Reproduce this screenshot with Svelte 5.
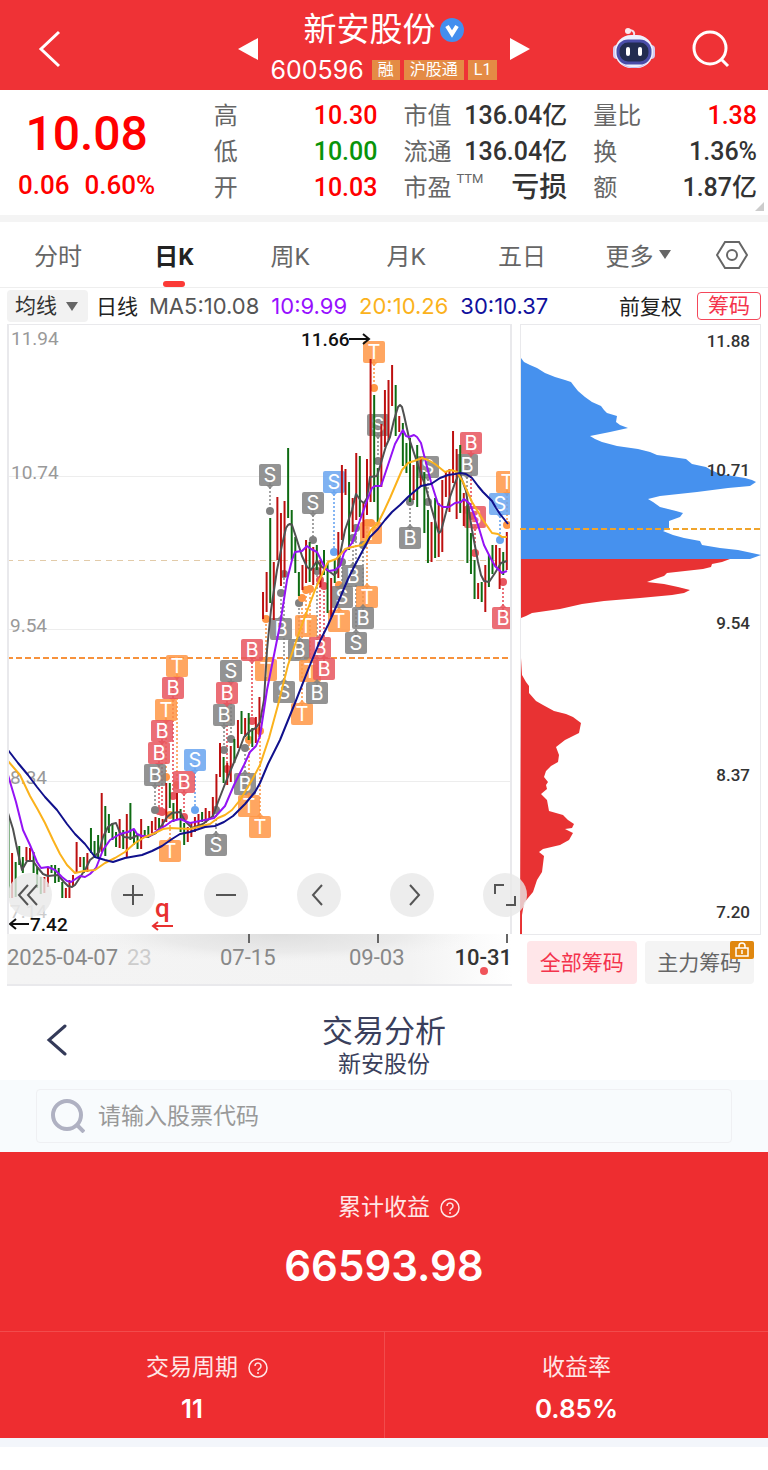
<script>
  let period = $state('日K');
  let chipMode = $state('all');
  let code = $state('');
  let indicator = $state('均线');

  const quoteColumns = [
    [
      { label: '高', value: '10.30', tone: 'up' },
      { label: '低', value: '10.00', tone: 'down' },
      { label: '开', value: '10.03', tone: 'up' },
    ],
    [
      { label: '市值', value: '136.04亿' },
      { label: '流通', value: '136.04亿' },
      { label: '市盈', sup: 'TTM', value: '亏损', tone: 'word' },
    ],
    [
      { label: '量比', value: '1.38', tone: 'up' },
      { label: '换', value: '1.36%' },
      { label: '额', value: '1.87亿' },
    ],
  ];

  const periods = ['分时', '日K', '周K', '月K', '五日'];

  const averages = [
    { text: 'MA5:10.08', cls: 'ma5' },
    { text: '10:9.99', cls: 'ma10' },
    { text: '20:10.26', cls: 'ma20' },
    { text: '30:10.37', cls: 'ma30' },
  ];

  // one bar per trading day: direction, top, bottom
  const bars = `
    g817-898 r853-898 g862-897 g846-865 g857-873 r847-861 r848-861 g852-873 g867-888 g877-894
    r877-893 r867-887 g865-873 g865-883 g868-882 g882-898 r888-898 r880-898 r875-887 r842-873
    r857-867 g857-873 r853-872 g828-853 g841-858 g835-858 r793-852 g806-856 g814-833 g823-840
    g832-847 r819-848 g830-849 r814-858 g803-840 g830-845 g835-849 r819-849 g830-838 g826-838
    r821-833 r817-830 g818-830 r819-827 r783-822 g783-808 g803-822 r793-820 g809-832 g823-845
    r827-842 r823-837 r817-832 r814-827 g812-822 r808-823 r811-820 r797-817 r774-807 r743-777
    g757-783 r763-785 r746-782 g739-763 r720-748 g711-734 r718-737 g713-740 g728-747 r717-743
    r697-737 r592-619 r572-612 g518-603 r562-620 r497-560 r513-586 r501-577 g448-518 g510-560
    g537-573 g572-596 r565-590 r540-583 g542-582 r547-585 g545-570 r560-587 g550-575 g563-613
    r578-617 g560-583 r532-578 r465-540 r469-495 g482-550 r498-532 r453-520 g456-517 r502-538
    r459-515 r359-502 g395-502 g468-522 r424-487 r390-447 r380-440 r365-406 g385-436 r416-432
    g423-466 g443-473 g438-502 r465-500 g445-507 r457-487 g472-533 g510-563 r522-562 g498-558
    r503-557 r480-552 r472-497 r469-512 r431-483 r449-519 g445-513 r493-526 g502-563 g533-574
    g560-599 r583-599 g582-602 r565-612 g555-587 g545-574 r545-567 r548-589 g552-575 r532-570
  `
    .trim()
    .split(/\s+/)
    .map((bar, i) => {
      const [top, bottom] = bar.slice(1).split('-').map(Number);
      return { x: 8.5 + i * 3.585, top, bottom, up: bar[0] === 'r' };
    });

  const maLines = [
    { cls: 'ma5', points: '8,813 13,829 18,853 22,870 27,861 33,861 38,868 43,874 48,876 58,875 64,882 68,886 72,887 75,885 79,879 86,868 90,860 95,856 99,852 103,837 108,827 112,824 116,823 120,833 124,837 132,838 138,835 147,837 156,833 162,825 167,817 172,813 180,812 185,821 192,828 203,824 213,816 218,802 225,784 232,767 238,753 244,737 250,731 256,728 260,722 264,700 267,650 271,610 277,570 282,545 286,528 288,525 290,524 292,525 296,537 302,556 307,567 311,570 317,561 322,567 330,572 334,575 337,572 340,555 345,530 352,510 356,494 361,501 364,503 367,498 370,477 377,476 381,463 386,446 390,437 394,420 398,407 400,405 402,407 404,415 409,438 413,450 420,471 426,488 432,510 438,531 439,533 441,531 444,520 450,497 455,483 458,476 460,474 466,491 472,530 478,562 481,575 484,581 489,582 495,573 501,563 507,561' },
    { cls: 'ma10', points: '8,775 16,802 23,830 30,845 37,862 41,868 48,867 55,870 62,877 67,881 71,882 80,876 85,877 90,874 96,868 103,850 110,840 120,834 128,832 134,829 137,834 142,836 150,836 158,830 165,826 172,821 180,819 190,823 200,821 214,818 225,806 234,785 244,765 250,752 256,746 260,736 267,690 272,665 280,625 287,580 292,560 295,552 302,551 307,546 311,549 317,552 321,560 325,568 329,571 335,570 340,566 344,553 352,543 360,520 368,498 372,488 375,486 381,486 386,471 395,444 400,435 403,430 406,436 409,437 414,435 417,437 421,443 424,455 431,482 438,504 443,507 449,507 455,503 461,502 464,499 470,504 478,525 484,545 490,557 495,566 502,573 507,571' },
    { cls: 'ma20', points: '8,761 20,775 30,796 38,810 45,823 53,840 60,854 67,865 75,873 84,871 95,870 105,863 115,858 125,852 135,843 145,837 155,833 163,829 170,828 190,829 210,824 218,818 225,815 232,810 240,800 252,780 260,765 269,738 278,705 288,665 300,630 315,590 324,570 328,562 336,559 341,554 345,549 352,547 362,545 366,541 371,530 378,523 384,511 390,498 396,484 402,470 408,463 414,461 422,458 428,460 435,464 445,472 451,470 457,472 463,482 472,502 483,520 492,533 498,534 502,537 507,537' },
    { cls: 'ma30', points: '8,750 18,763 28,775 37,787 45,797 57,810 67,824 75,834 85,844 95,857 105,860 113,862 125,858 142,855 152,851 162,846 172,839 180,834 190,832 205,827 215,826 224,822 233,816 245,804 255,792 260,783 268,764 280,740 295,703 310,665 320,641 328,625 340,598 348,579 355,565 363,550 370,537 378,529 385,520 392,512 400,505 408,497 415,491 421,486 431,484 440,478 448,475 455,474 460,473 466,474 472,478 478,486 483,492 492,501 496,508 500,514 508,524' },
  ];

  // x, y of the flag, its letter and tone, and y of the dot it points to
  const flags = [
    [177, 666, 'T', 'orange', 785],
    [173, 688, 'B', 'red', 796],
    [166, 710, 'T', 'orange', 777],
    [162, 731, 'B', 'red', 812],
    [159, 753, 'B', 'red', 811],
    [155, 775, 'B', 'gray', 810],
    [184, 782, 'B', 'red', 817],
    [195, 760, 'S', 'blue', 810],
    [170, 851, 'T', 'orange', 815],
    [216, 845, 'S', 'gray', 810],
    [231, 671, 'S', 'gray', 739],
    [224, 715, 'B', 'gray', 750],
    [227, 693, 'B', 'red', 769],
    [266, 670, 'T', 'orange', 619],
    [252, 650, 'B', 'red', 721],
    [245, 784, 'B', 'gray', 748],
    [249, 806, 'T', 'orange', 740],
    [260, 827, 'T', 'orange', 731],
    [270, 475, 'S', 'gray', 511],
    [313, 503, 'S', 'gray', 540],
    [334, 482, 'S', 'blue', 552],
    [374, 352, 'T', 'orange', 388],
    [378, 425, 'S', 'gray', 461],
    [428, 467, 'S', 'gray', 502],
    [410, 538, 'B', 'gray', 502],
    [467, 465, 'B', 'gray', 510],
    [475, 517, 'B', 'red', 553],
    [471, 443, 'B', 'red', 516],
    [507, 482, 'T', 'orange', 525],
    [500, 504, 'S', 'blue', 540],
    [503, 618, 'B', 'red', 582],
    [281, 629, 'B', 'gray', 593],
    [284, 692, 'S', 'gray', 574],
    [306, 626, 'T', 'orange', 590],
    [299, 650, 'B', 'gray', 603],
    [302, 714, 'T', 'orange', 598],
    [310, 671, 'T', 'orange', 589],
    [320, 648, 'B', 'red', 580],
    [324, 669, 'B', 'red', 586],
    [317, 693, 'B', 'gray', 571],
    [339, 621, 'T', 'orange', 585],
    [342, 597, 'S', 'gray', 562],
    [353, 576, 'B', 'gray', 538],
    [371, 533, 'T', 'orange', 523],
    [367, 597, 'T', 'orange', 523],
    [363, 618, 'B', 'gray', 545],
    [356, 643, 'S', 'gray', 528],
  ];

  const chipLabels = [
    { y: 347, text: '11.88' },
    { y: 476, text: '10.71' },
    { y: 629, text: '9.54' },
    { y: 781, text: '8.37' },
    { y: 918, text: '7.20' },
  ];

  const controls = [
    { name: '最早', d: 'M20 12l-9 10 9 10M29 12l-9 10 9 10' },
    { name: '放大', d: 'M22 12v20M12 22h20' },
    { name: '缩小', d: 'M12 22h20' },
    { name: '向左', d: 'M25 12l-9 10 9 10' },
    { name: '向右', d: 'M20 12l9 10-9 10' },
    { name: '全屏', d: 'M12 21v-9h9M32 23v9h-9' },
  ];
</script>

{#snippet help()}
  <svg class="help" width="20" height="20" viewBox="0 0 20 20" aria-hidden="true">
    <circle cx="10" cy="10" r="9" />
    <path d="M7 8a3 3 0 1 1 4.600 2.500c-1 .7-1.600 1.100-1.600 2.200" />
    <circle class="help-dot" cx="10" cy="15" r="1" />
  </svg>
{/snippet}

<header class="topbar">
  <button type="button" class="icon-btn" aria-label="返回">
    <svg width="24" height="38" viewBox="0 0 24 38"><path d="M21 2L3 19l18 17" /></svg>
  </button>
  <div class="stock">
    <button type="button" class="icon-btn" aria-label="上一只">
      <svg class="solid" width="20" height="24" viewBox="0 0 20 24"><path d="M20 1v22L0 12z" /></svg>
    </button>
    <div class="stock-name">
      <h1>
        新安股份
        <svg width="24" height="26" viewBox="0 0 24 26" aria-hidden="true">
          <circle cx="12" cy="13" r="12" fill="#438eee" />
          <path d="M7 9l5 8 5-8" fill="none" stroke="#fff" stroke-width="4" />
        </svg>
      </h1>
      <p>
        <span class="stock-code">600596</span>
        <span class="tag">融</span>
        <span class="tag">沪股通</span>
        <span class="tag">L1</span>
      </p>
    </div>
    <button type="button" class="icon-btn" aria-label="下一只">
      <svg class="solid" width="20" height="24" viewBox="0 0 20 24"><path d="M0 1v22l20-11z" /></svg>
    </button>
  </div>
  <div class="actions">
    <button type="button" class="icon-btn" aria-label="智能助手">
      <svg class="robot" width="44" height="42" viewBox="0 0 44 42">
        <path d="M22 8c1-4-1-6-5-6" fill="none" stroke="#f4dfe9" stroke-width="2" />
        <circle cx="16" cy="3" r="3" fill="#fbe9ef" />
        <rect x="1" y="17" width="8" height="14" rx="4" fill="#d5caf1" />
        <rect x="35" y="17" width="8" height="14" rx="4" fill="#d5caf1" />
        <rect x="3" y="7" width="38" height="33" rx="16" fill="#eef0fd" />
        <path d="M8 33c6 8 22 8 28 0-3 5-8 7-14 7s-11-2-14-7" fill="#c6bdf0" />
        <rect x="6" y="13" width="32" height="22" rx="10" fill="#222c50" stroke="#4a4da8" />
        <rect x="14" y="19" width="4" height="9" rx="2" fill="#fff" />
        <rect x="26" y="19" width="4" height="9" rx="2" fill="#fff" />
      </svg>
    </button>
    <button type="button" class="icon-btn" aria-label="搜索">
      <svg width="38" height="38" viewBox="0 0 38 38"><circle cx="18" cy="18" r="16" /><path d="M29 29l7 7" /></svg>
    </button>
  </div>
</header>

<section class="quote">
  <div class="price">
    <strong>10.08</strong>
    <p><span>0.06</span><span>0.60%</span></p>
  </div>
  {#each quoteColumns as column}
    <dl>
      {#each column as item}
        <div>
          <dt>{item.label}{#if item.sup}<sup>{item.sup}</sup>{/if}</dt>
          <dd class={item.tone}>{item.value}</dd>
        </div>
      {/each}
    </dl>
  {/each}
  <svg class="corner" width="9" height="9" viewBox="0 0 9 9" aria-hidden="true"><path d="M9 0v9H0z" /></svg>
</section>

<nav class="tabs">
  {#each periods as name}
    <button type="button" class:active={period === name} onclick={() => (period = name)}>{name}</button>
  {/each}
  <button type="button" aria-haspopup="menu">
    更多<svg width="12" height="10" viewBox="0 0 12 10" aria-hidden="true"><path d="M0 0h12L6 9z" fill="#666" /></svg>
  </button>
  <button type="button" class="settings" aria-label="设置">
    <svg width="32" height="28" viewBox="0 0 32 28">
      <path d="M9 1h14l8 13-8 13H9L1 14z" />
      <circle cx="16" cy="14" r="5" />
    </svg>
  </button>
</nav>

<div class="averages">
  <div class="picker">
    <select bind:value={indicator} aria-label="指标">
      <option>均线</option>
    </select>
    <svg width="12" height="10" viewBox="0 0 12 10" aria-hidden="true"><path d="M0 0h12L6 9z" fill="#666" /></svg>
  </div>
  <span class="unit">日线</span>
  {#each averages as avg}
    <span class="avg {avg.cls}">{avg.text}</span>
  {/each}
  <span class="adjust">前复权</span>
  <button type="button" class="chip-toggle">筹码</button>
</div>

<main class="charts">
  <div class="kline">
    <svg viewBox="7 324 505 662" role="img" aria-label="日K线">
      <defs>
        <linearGradient id="axis-x">
          <stop offset="0" stop-color="#f4f4f4" />
          <stop offset="0.8" stop-color="#f3f3f3" />
          <stop offset="1" stop-color="#fff" />
        </linearGradient>
        <radialGradient id="axis-shade" cx="0.5" cy="0" fy="0" r="0.5" gradientTransform="scale(1 2)">
          <stop offset="0" stop-color="#dedede" />
          <stop offset="0.6" stop-color="#e6e6e6" stop-opacity="0.7" />
          <stop offset="1" stop-color="#f4f4f4" stop-opacity="0" />
        </radialGradient>
      </defs>

      <path class="grid" d="M7 476h505M7 629h505M7 781h505" />
      <text class="level" x="11" y="345">11.94</text>
      <text class="level" x="11" y="479">10.74</text>
      <text class="level" x="10" y="632">9.54</text>
      <text class="level" x="10" y="784">8.34</text>
      <text class="level faint" x="10" y="918">7.14</text>
      <path class="cost" d="M7 560h505" />
      <path class="avg-cost" d="M7 658h505" />

      {#each flags as [x, y, , tone, dot]}
        <path class="stem {tone}" d="M{x} {y}V{dot}" />
      {/each}
      {#each flags as [x, y, letter, tone, dot]}
        <g class="flag {tone}">
          <path d={dot > y ? `M${x - 4} ${y + 10}h8l-4 4z` : `M${x - 4} ${y - 10}h8l-4-4z`} />
          <rect x={x - 11} y={y - 11} width="22" height="22" rx="2" />
          <text {x} y={y + 7}>{letter}</text>
          <circle cx={x} cy={dot} r="4" />
        </g>
      {/each}

      {#each bars as bar}
        <path class="bar" class:rise={bar.up} d="M{bar.x} {bar.top}V{bar.bottom}" />
      {/each}
      {#each maLines as line}
        <polyline class="line {line.cls}" points={line.points} />
      {/each}

      <text class="extreme" x="301" y="346">11.66</text>
      <path class="arrow" d="M349 339h20M363 334l6 5-6 5" />
      <text class="extreme" x="30" y="931">7.42</text>
      <path class="arrow" d="M29 924H10M16 919l-6 5 6 5" />
      <text class="ex-mark" x="155" y="917">q</text>
      <path class="ex-arrow" d="M173 926h-19M158 922l-5 4 5 4" />

      <rect x="7" y="934" width="505" height="51" fill="url(#axis-x)" />
      <rect x="80" y="934" width="400" height="30" fill="url(#axis-shade)" />
      <path class="tick" d="M249 934v9M378 934v9M507 934v9" />
      <text class="date fading" x="127" y="965">23</text>
      <text class="date" x="7" y="965">2025-04-07</text>
      <text class="date" x="220" y="965">07-15</text>
      <text class="date" x="349" y="965">09-03</text>
      <text class="date today" x="512" y="965">10-31</text>
      <circle cx="484" cy="971" r="4" fill="#f0545a" />
      <path class="frame" d="M8 934V324H511V934M7 985h505" />
    </svg>
    <div class="controls">
      {#each controls as control}
        <button type="button" aria-label={control.name}>
          <svg width="44" height="44" viewBox="0 0 44 44"><path d={control.d} /></svg>
        </button>
      {/each}
    </div>
  </div>

  <div class="chips">
    <svg viewBox="520 324 241 611" role="img" aria-label="筹码分布">
      <path class="frame" d="M520 935V324H761V935H520" />
      <polygon fill="#4691ee" points="521,358 524,362 530,365 537,368 545,373 555,377 565,380 571,382 574,386 578,391 585,397 592,402 601,406 604,410 607,413 617,416 616,422 620,425 628,428 610,432 590,436 595,439 602,442 617,446 638,449 650,452 657,455 672,457 686,459 692,464 706,467 711,470 720,474 745,478 752,480 756,482 750,486 728,488 697,492 660,496 648,499 653,502 660,507 676,511 683,513 680,517 669,521 669,528 663,531 673,535 684,538 700,541 702,545 720,548 738,550 752,553 761,555 750,559 521,559" />
      <polygon fill="#e83233" points="521,559 730,559 722,562 712,564 711,567 703,569 685,571 667,573 664,576 655,579 647,582 664,584 678,587 690,590 684,593 672,595 640,598 604,601 582,604 560,609 532,613 526,616 521,618" />
      <polygon fill="#e83233" points="521,658 522,675 526,682 529,686 529,693 536,701 543,705 554,711 566,714 573,717 581,723 579,733 571,737 565,740 556,747 559,755 558,762 551,766 546,771 544,777 548,782 546,785 547,789 541,794 547,800 549,811 563,815 568,820 574,824 572,828 565,829 573,833 569,840 560,845 543,849 539,852 544,856 543,864 542,872 537,880 533,892 528,898 524,903 522,915 522,934 520,934" />
      <path class="mean" d="M520 529h241" />
      {#each chipLabels as label}
        <text x="750" y={label.y}>{label.text}</text>
      {/each}
    </svg>
    <div class="chip-modes">
      <button type="button" class:on={chipMode === 'all'} onclick={() => (chipMode = 'all')}>全部筹码</button>
      <button type="button" class:on={chipMode === 'main'} onclick={() => (chipMode = 'main')}>
        主力筹码
        <svg class="lock" width="24" height="18" viewBox="0 0 24 18" aria-hidden="true">
          <rect width="24" height="18" rx="2" fill="#e0870f" />
          <path d="M6 7h12v8H6zM9 7V5c0-4 6-4 6 0v2M12 9v4" />
        </svg>
      </button>
    </div>
  </div>
</main>

<header class="analysis-head">
  <button type="button" class="icon-btn" aria-label="返回">
    <svg width="22" height="34" viewBox="0 0 22 34"><path d="M20 3L4 17l16 14" /></svg>
  </button>
  <div>
    <h2>交易分析</h2>
    <p>新安股份</p>
  </div>
</header>

<div class="search">
  <label>
    <svg width="34" height="34" viewBox="0 0 34 34" aria-hidden="true"><circle cx="16" cy="16" r="14" /><path d="M25 25l8 8" /></svg>
    <input type="text" placeholder="请输入股票代码" aria-label="股票代码" bind:value={code} />
  </label>
</div>

<section class="profit">
  <div class="total">
    <h3>累计收益 {@render help()}</h3>
    <strong>66593.98</strong>
  </div>
  <div class="split">
    <div>
      <h3>交易周期 {@render help()}</h3>
      <strong>11</strong>
    </div>
    <div>
      <h3>收益率</h3>
      <strong>0.85%</strong>
    </div>
  </div>
</section>

<style>
  :global(body) {
    background: #fff;
    color: #333;
    font-family: Roboto, "Noto Sans CJK SC", sans-serif;
  }

  h1, h2, h3, p, dl, dd {
    margin: 0;
    font-weight: 400;
  }

  button {
    padding: 0;
    border: none;
    background: none;
    font-family: inherit;
    color: inherit;
    cursor: pointer;
  }

  svg {
    display: block;
  }

  .icon-btn svg {
    fill: none;
    stroke: #fff;
    stroke-width: 3;
  }

  .icon-btn .solid {
    fill: #fff;
    stroke: none;
  }

  .icon-btn .robot {
    stroke: none;
  }

  .topbar {
    display: grid;
    grid-template-columns: 1fr auto 1fr;
    align-items: center;
    height: 90px;
    box-sizing: border-box;
    padding: 8px 38px 0;
    background: #ef3236;
    color: #fff;
  }

  .topbar .icon-btn {
    justify-self: start;
  }

  .stock {
    display: flex;
    align-items: center;
    gap: 13px;
  }

  .stock-name {
    display: flex;
    flex-direction: column;
    align-items: center;
  }

  .stock-name h1 {
    display: flex;
    align-items: center;
    gap: 5px;
    font-size: 33px;
    line-height: 42px;
  }

  .stock-name p {
    display: flex;
    align-items: center;
    gap: 4px;
    line-height: 38px;
  }

  .stock-code {
    margin-right: 4px;
    font-family: Inter, sans-serif;
    font-size: 25px;
  }

  .tag {
    padding: 0 6px;
    background: #e48b45;
    font-size: 16px;
    line-height: 20px;
  }

  .actions {
    display: flex;
    justify-content: flex-end;
    align-items: center;
    gap: 36px;
  }

  .quote {
    position: relative;
    display: grid;
    grid-template-columns: 170fr 164fr 164fr 164fr;
    gap: 26px;
    padding: 8px 11px 9px 18px;
    border-bottom: 7px solid #f4f4f4;
  }

  .price {
    justify-self: start;
    color: #f00;
    text-align: center;
  }

  .price strong {
    display: block;
    font-size: 48px;
    font-weight: 500;
    line-height: 72px;
  }

  .price p {
    display: flex;
    gap: 15px;
    font-size: 26px;
    font-weight: 500;
    line-height: 30px;
  }

  .quote dl div {
    display: flex;
    justify-content: space-between;
    line-height: 36px;
    white-space: nowrap;
  }

  dt {
    color: #666;
    font-size: 24px;
  }

  dt sup {
    font-size: 13px;
    line-height: 0;
    margin-left: 5px;
    vertical-align: 13px;
  }

  dd {
    font-size: 25px;
    font-weight: 500;
  }

  .up { color: #f00; }
  .down { color: #099409; }
  .word { font-size: 28px; }

  .corner {
    position: absolute;
    right: 4px;
    bottom: 4px;
    fill: #ccc;
  }

  .tabs {
    display: flex;
    height: 65px;
    border-bottom: 1px solid #eee;
  }

  .tabs button {
    flex: 116;
    display: flex;
    align-items: center;
    justify-content: center;
    gap: 5px;
    position: relative;
    font-size: 24px;
    color: #666;
  }

  .tabs .active {
    color: #222;
    font-weight: 700;
  }

  .tabs .active::after {
    content: '';
    position: absolute;
    bottom: 0;
    width: 22px;
    height: 6px;
    border-radius: 3px;
    background: #fb3a36;
  }

  .tabs .settings {
    flex: 72;
  }

  .settings svg {
    fill: none;
    stroke: #666;
    stroke-width: 2;
  }

  .averages {
    display: flex;
    align-items: center;
    height: 36px;
    padding: 0 7px;
    font-size: 21px;
    color: #222;
  }

  .picker {
    position: relative;
    width: 81px;
    margin-right: 8px;
  }

  .picker select {
    appearance: none;
    width: 100%;
    height: 32px;
    padding: 0 8px;
    border: none;
    border-radius: 4px;
    background: #f2f2f2;
    color: #333;
    font-family: inherit;
    font-size: 21px;
  }

  .picker svg {
    position: absolute;
    right: 10px;
    top: 12px;
    pointer-events: none;
  }

  .unit,
  .adjust {
    padding-bottom: 3px;
  }

  .unit {
    margin-right: 11px;
  }

  .avg {
    margin-right: 12px;
    font-family: Inter, sans-serif;
    font-size: 22px;
  }

  .avg.ma5 { color: #555; }
  .avg.ma10 { color: #9710ff; }
  .avg.ma20 { color: #fbb21c; }
  .avg.ma30 { color: #10109c; }

  .adjust {
    margin-left: auto;
    margin-right: 15px;
  }

  .chip-toggle {
    height: 28px;
    padding: 0 10px;
    border: 1px solid #f4475a;
    border-radius: 4px;
    color: #f4334c;
    font-size: 21px;
    line-height: 26px;
  }

  .charts {
    display: grid;
    grid-template-columns: 505fr 241fr;
    gap: 8px;
    padding: 0 7px;
  }

  .kline {
    position: relative;
  }

  .kline > svg,
  .chips > svg {
    width: 100%;
    height: auto;
  }

  .frame {
    fill: none;
    stroke: #e9e9ec;
    stroke-width: 2;
  }

  .grid {
    stroke: #ededed;
    shape-rendering: crispEdges;
  }

  .level {
    font-size: 19px;
    fill: #999;
  }

  .faint { fill: #ccc; }

  .cost {
    stroke: #e2cba9;
    stroke-dasharray: 6 5;
    shape-rendering: crispEdges;
  }

  .avg-cost {
    stroke: #f7923c;
    stroke-width: 2;
    stroke-dasharray: 6 3;
  }

  .stem {
    fill: none;
    stroke-width: 1.5;
    stroke-dasharray: 2 2;
  }

  .stem.gray { stroke: #858585; }
  .stem.red { stroke: #e5404c; }
  .stem.orange { stroke: #fb9340; }
  .stem.blue { stroke: #5f9ff0; }

  .flag path,
  .flag rect {
    opacity: 0.85;
  }

  .flag.gray { fill: #808080; }
  .flag.red { fill: #e8555e; }
  .flag.orange { fill: #ff9645; }
  .flag.blue { fill: #69a5f0; }

  .flag text {
    fill: #fff;
    font-family: Inter, sans-serif;
    font-size: 20px;
    text-anchor: middle;
  }

  .bar {
    stroke: #0e6b12;
    stroke-width: 2;
  }

  .bar.rise {
    stroke: #bd1010;
  }

  .line {
    fill: none;
    stroke-width: 2;
    stroke-linejoin: round;
  }

  .line.ma5 { stroke: #505050; }
  .line.ma10 { stroke: #9412f5; }
  .line.ma20 { stroke: #fbb21c; }
  .line.ma30 { stroke: #10108c; }

  .extreme {
    font-size: 19px;
    font-weight: 500;
    fill: #111;
  }

  .arrow {
    fill: none;
    stroke: #111;
    stroke-width: 2;
  }

  .ex-mark {
    fill: #e8302f;
    font-size: 26px;
    font-weight: 500;
  }

  .ex-arrow {
    fill: none;
    stroke: #e8302f;
    stroke-width: 2;
  }

  .tick {
    stroke: #666;
    stroke-width: 2;
  }

  .date {
    font-size: 22px;
    fill: #888;
  }

  .fading { fill: #ccc; }

  .today {
    fill: #333;
    font-weight: 500;
    text-anchor: end;
  }

  .controls {
    position: absolute;
    left: 1px;
    right: -15px;
    bottom: 69px;
    display: flex;
    justify-content: space-between;
  }

  .controls button {
    width: 44px;
    height: 44px;
    border-radius: 50%;
    background: rgb(232 232 232 / 0.8);
  }

  .controls button:first-child {
    margin-right: 10px;
  }

  .controls svg {
    fill: none;
    stroke: #555;
    stroke-width: 2;
  }

  .chips text {
    font-size: 17px;
    font-weight: 500;
    fill: #333;
    text-anchor: end;
  }

  .mean {
    stroke: #f0a42c;
    stroke-width: 2;
    stroke-dasharray: 6 3;
  }

  .chip-modes {
    display: grid;
    grid-template-columns: 1fr 1fr;
    gap: 8px;
    padding: 6px 7px 0;
  }

  .chip-modes button {
    position: relative;
    height: 43px;
    padding-bottom: 3px;
    border-radius: 4px;
    background: #f4f4f4;
    color: #666;
    font-size: 21px;
  }

  .chip-modes .on {
    background: #ffe6e9;
    color: #f4334c;
  }

  .lock {
    position: absolute;
    top: 0;
    right: 0;
    fill: none;
    stroke: #fff;
    stroke-width: 1.5;
  }

  .lock rect {
    stroke: none;
  }

  .analysis-head {
    display: grid;
    grid-template-columns: 1fr auto 1fr;
    align-items: start;
    padding: 27px 45px 0;
    height: 67px;
    color: #3a3f5c;
    text-align: center;
  }

  .analysis-head .icon-btn {
    justify-self: start;
    padding-top: 10px;
  }

  .analysis-head svg {
    stroke: #343a59;
    stroke-linecap: round;
  }

  .analysis-head h2 {
    font-size: 31px;
    line-height: 38px;
  }

  .analysis-head p {
    font-size: 23px;
    line-height: 28px;
  }

  .search {
    padding: 9px 36px;
    background: #f8fbfd;
  }

  .search label {
    display: flex;
    align-items: center;
    gap: 11px;
    height: 52px;
    padding: 0 14px;
    border: 1px solid #eff0f3;
    border-radius: 4px;
  }

  .search svg {
    fill: none;
    stroke: #afb1c2;
    stroke-width: 4;
  }

  .search input {
    flex: 1;
    min-width: 0;
    border: none;
    outline: none;
    background: none;
    color: #333;
    font-family: inherit;
    font-size: 23px;
  }

  .search input::placeholder {
    color: #999;
  }

  .profit {
    border-bottom: 9px solid #f3f6fb;
    background: #ee2d30;
    color: #fff;
    text-align: center;
  }

  .total {
    padding: 38px 0 25px;
  }

  .profit h3 {
    display: flex;
    align-items: center;
    justify-content: center;
    gap: 10px;
    font-size: 23px;
    line-height: 36px;
    color: #ffe6e6;
  }

  .profit strong {
    font-family: Inter, sans-serif;
    font-weight: 600;
  }

  .total strong {
    display: block;
    font-size: 42px;
    line-height: 80px;
  }

  .split {
    display: grid;
    grid-template-columns: 1fr 1fr;
    border-top: 1px solid #f24b4c;
  }

  .split div {
    padding: 18px 0 6px;
  }

  .split div + div {
    border-left: 1px solid #f24b4c;
  }

  .split strong {
    display: block;
    font-size: 26px;
    line-height: 46px;
  }

  /* the icon hangs beside the label, the label itself stays centred */
  .help {
    margin-right: -30px;
    fill: none;
    stroke: currentColor;
    stroke-width: 1.5;
  }

  .help-dot {
    fill: currentColor;
    stroke: none;
  }
</style>
